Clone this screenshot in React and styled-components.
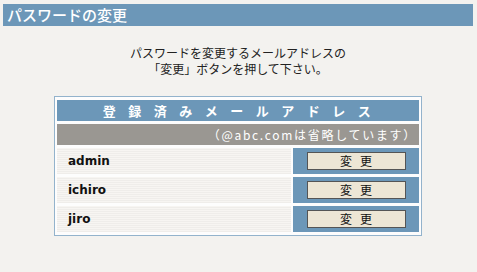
import React from 'react';
import styled, { createGlobalStyle } from 'styled-components';

const GlobalStyle = createGlobalStyle`
  html, body {
    margin: 0;
    padding: 0;
    background: #f3f2ef;
  }
  body {
    font-family: "Noto Sans CJK JP", "DejaVu Sans", sans-serif;
    color: #222;
  }
`;

const Page = styled.div`
  width: 477px;
  height: 272px;
  padding: 4px 4px 0 3px;
  box-sizing: border-box;
`;

const TitleBar = styled.div`
  height: 22px;
  background: #6c97b8;
  color: #fff;
  font-size: 15px;
  font-weight: 500;
  line-height: 22px;
  padding-left: 4px;
`;

const Message = styled.p`
  margin: 19px 0 0;
  text-align: center;
  font-size: 12px;
  line-height: 16px;
  color: #222;
`;

const Table = styled.table`
  margin: 19px 0 0 51px;
  width: 368px;
  border: 1px solid #93b3cc;
  border-spacing: 2px 3px;
  background: #fdfdfd;
`;

const HeaderCell = styled.th`
  height: 21px;
  padding: 0 0 0 10px;
  background: #6c97b8;
  color: #fff;
  font-size: 13px;
  font-weight: bold;
  letter-spacing: 12.5px;
  text-align: center;
`;

const NoteCell = styled.td`
  height: 21px;
  padding: 0 2px 0 0;
  background: #9a9792;
  color: #fff;
  font-size: 12px;
  letter-spacing: 1.7px;
  text-align: right;
`;

const NameCell = styled.td`
  height: 26px;
  padding: 0 0 0 11px;
  vertical-align: middle;
  background: repeating-linear-gradient(#f7f5f2 0 1px, #efedea 1px 2px);
  font-family: "DejaVu Sans", sans-serif;
  font-size: 12px;
  line-height: 14px;
  font-weight: bold;
  color: #111;
`;

const ButtonCell = styled.td`
  width: 126px;
  height: 26px;
  padding: 0;
  vertical-align: middle;
  background: #6c97b8;
  text-align: center;
  line-height: 0;
`;

const Button = styled.button`
  width: 99px;
  height: 18px;
  padding: 0;
  background: #ede6d5;
  border: 1px solid #555;
  font-family: "Noto Sans CJK JP", sans-serif;
  font-size: 12px;
  line-height: 14px;
  letter-spacing: 8px;
  text-indent: 8px;
  color: #111;
`;

const users = ['admin', 'ichiro', 'jiro'];

export default function App() {
  return (
    <>
      <GlobalStyle />
      <Page>
        <TitleBar>パスワードの変更</TitleBar>
        <Message>
          パスワードを変更するメールアドレスの
          <br />
          「変更」ボタンを押して下さい。
        </Message>
        <Table>
          <tbody>
            <tr>
              <HeaderCell colSpan={2}>登録済みメールアドレス</HeaderCell>
            </tr>
            <tr>
              <NoteCell colSpan={2}>（@abc.comは省略しています）</NoteCell>
            </tr>
            {users.map((u) => (
              <tr key={u}>
                <NameCell>{u}</NameCell>
                <ButtonCell>
                  <Button>変更</Button>
                </ButtonCell>
              </tr>
            ))}
          </tbody>
        </Table>
      </Page>
    </>
  );
}
